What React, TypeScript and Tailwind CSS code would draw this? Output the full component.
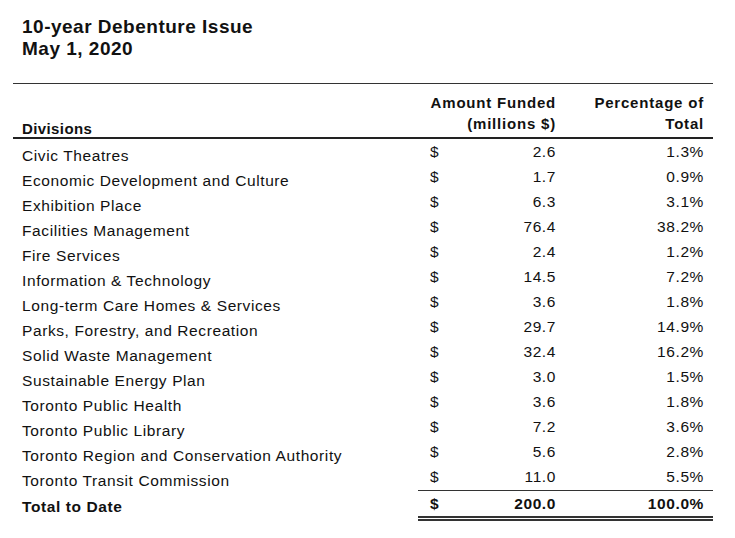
const rows = [
  { name: "Civic Theatres", amount: "2.6", pct: "1.3%" },
  { name: "Economic Development and Culture", amount: "1.7", pct: "0.9%" },
  { name: "Exhibition Place", amount: "6.3", pct: "3.1%" },
  { name: "Facilities Management", amount: "76.4", pct: "38.2%" },
  { name: "Fire Services", amount: "2.4", pct: "1.2%" },
  { name: "Information & Technology", amount: "14.5", pct: "7.2%" },
  { name: "Long-term Care Homes & Services", amount: "3.6", pct: "1.8%" },
  { name: "Parks, Forestry, and Recreation", amount: "29.7", pct: "14.9%" },
  { name: "Solid Waste Management", amount: "32.4", pct: "16.2%" },
  { name: "Sustainable Energy Plan", amount: "3.0", pct: "1.5%" },
  { name: "Toronto Public Health", amount: "3.6", pct: "1.8%" },
  { name: "Toronto Public Library", amount: "7.2", pct: "3.6%" },
  { name: "Toronto Region and Conservation Authority", amount: "5.6", pct: "2.8%" },
  { name: "Toronto Transit Commission", amount: "11.0", pct: "5.5%" },
];

export default function App() {
  return (
    <div className="w-[735px] h-[538px] bg-white text-[#111] font-['Liberation_Sans',Arial,sans-serif]">
      {/* Title */}
      <div className="pt-[16px] pl-[22px] text-[19px] font-bold leading-[22px] tracking-[0.5px]">
        <div>10-year Debenture Issue</div>
        <div>May 1, 2020</div>
      </div>

      <div className="ml-[13px] w-[700px] mt-[23px]">
        {/* Header */}
        <div className="border-t border-[#333] border-b-2 border-b-[#222] h-[56px] grid grid-cols-[405px_138px_157px] text-[15px] font-bold leading-[21px] tracking-[0.8px]">
          <div className="pl-[9px] flex items-end leading-[15px] pb-[1px] tracking-[0.4px]">Divisions</div>
          <div className="text-right pt-[8px]">
            <div>Amount Funded</div>
            <div>(millions $)</div>
          </div>
          <div className="text-right pr-[9px] pt-[8px]">
            <div>Percentage of</div>
            <div>Total</div>
          </div>
        </div>

        {/* Rows */}
        <div className="text-[15.5px] leading-[25px] tracking-[0.6px]">
          {rows.map((r) => (
            <div key={r.name} className="grid grid-cols-[405px_138px_157px] h-[25px]">
              <div className="pl-[9px] pt-[4px]">{r.name}</div>
              <div className="flex justify-between pl-[12px]">
                <span>$</span>
                <span>{r.amount}</span>
              </div>
              <div className="text-right pr-[9px]">{r.pct}</div>
            </div>
          ))}

          {/* Total */}
          <div className="grid grid-cols-[405px_138px_157px] font-bold mt-[1px]">
            <div className="pl-[9px] pt-[4px] h-[25px]">Total to Date</div>
            <div className="col-span-2 grid grid-cols-[138px_157px] border-t border-[#333] border-b-[5px] border-double">
              <div className="flex justify-between pl-[12px] h-[25px]">
                <span>$</span>
                <span>200.0</span>
              </div>
              <div className="text-right pr-[9px]">100.0%</div>
            </div>
          </div>
        </div>
      </div>
    </div>
  );
}
